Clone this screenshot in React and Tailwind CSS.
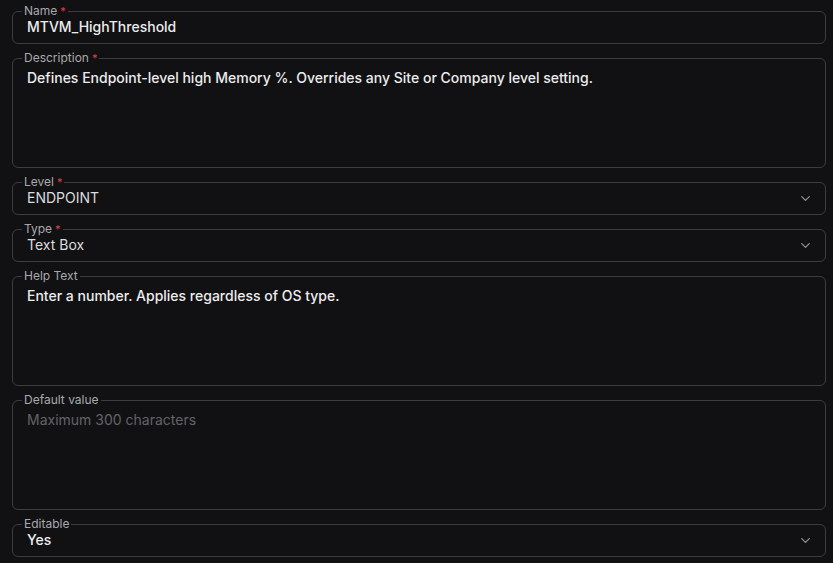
import React from "react";

function Chevron() {
  return (
    <svg width="15" height="15" viewBox="0 0 24 24" fill="none" stroke="#8b8b8f" strokeWidth="2.2" strokeLinecap="round" strokeLinejoin="round">
      <path d="M6 9l6 6 6-6" />
    </svg>
  );
}

function Field({ label, required, tall, children, select }) {
  return (
    <fieldset
      className={`border border-[#3d3d41] rounded-[6px] pl-[9px] pr-[12px] ${tall ? "h-[116px]" : "h-[39px]"}`}
    >
      <legend className="px-[2px] text-[12px] leading-[12px] text-[#a9a9ad]">
        {label}
        {required && <span className="text-[#d9414a] ml-[3px] text-[11px] align-top">*</span>}
      </legend>
      <div className={`flex items-center justify-between pl-[5px] h-[20px] ${tall ? "mt-[4px]" : ""}`}>
        <div className="text-[14px] leading-[20px]">{children}</div>
        {select && <Chevron />}
      </div>
    </fieldset>
  );
}

export default function App() {
  return (
    <div className="w-[833px] h-[563px] bg-[#111113] overflow-hidden" style={{ fontFamily: "Inter, 'Noto Sans', sans-serif" }}>
      <div className="ml-[12px] w-[814px] pt-[5px] flex flex-col gap-[8px]">
        <Field label="Name" required>
          <span className="font-medium text-[#ececee]">MTVM_HighThreshold</span>
        </Field>
        <Field label="Description" required tall>
          <span className="font-medium text-[#ececee]">
            Defines Endpoint-level high Memory %. Overrides any Site or Company level setting.
          </span>
        </Field>
        <Field label="Level" required select>
          <span className="text-[#dcdcdf]">ENDPOINT</span>
        </Field>
        <Field label="Type" required select>
          <span className="text-[#dcdcdf]">Text Box</span>
        </Field>
        <Field label="Help Text" tall>
          <span className="font-medium text-[#ececee]">Enter a number. Applies regardless of OS type.</span>
        </Field>
        <Field label="Default value" tall>
          <span className="text-[#636368]">Maximum 300 characters</span>
        </Field>
        <Field label="Editable" select>
          <span className="font-medium text-[#ececee]">Yes</span>
        </Field>
      </div>
    </div>
  );
}
